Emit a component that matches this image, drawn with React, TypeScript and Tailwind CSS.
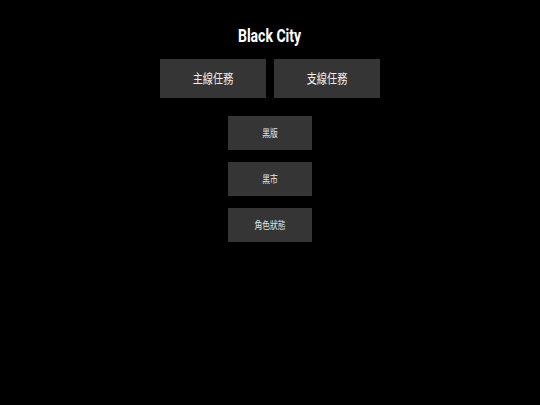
export default function App() {
  const font = { fontFamily: 'Roboto, "Noto Sans CJK TC", sans-serif' }
  const big = 'w-[106px] h-[39px] bg-[#353535] text-[#eeeeee] text-[13px] flex items-center justify-center'
  const small = 'w-[84px] h-[34px] bg-[#353535] text-[#e6e6e6] text-[10px] flex items-center justify-center'
  return (
    <div className="w-[540px] h-[405px] bg-black flex flex-col items-center" style={font}>
      <h1 className="mt-[25px] text-[18px] leading-[22px] font-bold text-white scale-x-[0.78]">Black City</h1>
      <div className="mt-[12px] flex gap-[8px]">
        <button className={big}><span className="scale-x-[0.78]">主線任務</span></button>
        <button className={big}><span className="scale-x-[0.78]">支線任務</span></button>
      </div>
      <div className="mt-[18px] flex flex-col gap-[12px]">
        <button className={small}><span className="scale-x-[0.78]">黑版</span></button>
        <button className={small}><span className="scale-x-[0.78]">黑市</span></button>
        <button className={small}><span className="scale-x-[0.78]">角色狀態</span></button>
      </div>
    </div>
  )
}
